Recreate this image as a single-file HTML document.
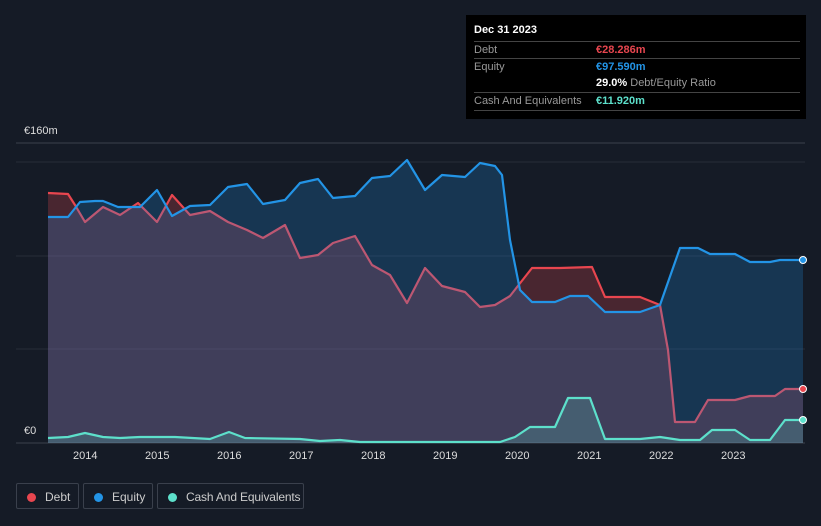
<!DOCTYPE html>
<html><head><meta charset="utf-8"><style>
body{margin:0;width:821px;height:526px;background:#151b26;font-family:"Liberation Sans",sans-serif;overflow:hidden;position:relative}
.tt{position:absolute;left:466px;top:15px;width:340px;height:104px;background:#000;color:#fff;font-size:11px}
.row{position:absolute;left:8px;width:326px;border-top:1px solid #444;height:17px;line-height:17px}
.lab{color:#999;position:absolute;left:0}
.val{position:absolute;left:122px;font-weight:bold}
.lg{position:absolute;top:483px;height:26px;border:1px solid #3a404c;border-radius:2px;color:#ccc;font-size:12px;line-height:26px;box-sizing:border-box;padding-left:10px;white-space:nowrap;overflow:hidden}
.dot{display:inline-block;width:9px;height:9px;border-radius:50%;margin-right:9px;vertical-align:-1px}
.ax{position:absolute;color:#ddd;font-size:11px}
</style></head><body>
<svg width="821" height="526" style="position:absolute;left:0;top:0">
<line x1="16" y1="143" x2="805" y2="143" stroke="#3a404c"/>
<g stroke="#262c38"><line x1="16" y1="162" x2="805" y2="162"/><line x1="16" y1="256" x2="805" y2="256"/><line x1="16" y1="349" x2="805" y2="349"/></g>
<line x1="16" y1="443" x2="805" y2="443" stroke="#3a404c"/>
<polygon fill="rgba(233,70,80,0.25)" points="48,443 48,193 68,194 75,205 85,222 103,207 120,215 138,203 157,222 172,195 190,215 210,211 228,222 247,230 263,238 285,225 300,258 318,255 333,243 355,236 372,265 390,275 407,303 425,268 442,286 465,292 480,307 495,305 510,296 532,268 560,268 592,267 605,297 640,297 660,305 668,350 675,422 695,422 708,400 735,400 750,396 775,396 785,389 803,389 803,443"/>
<polyline fill="none" stroke="#e8464f" stroke-width="2.2" stroke-linejoin="round" points="48,193 68,194 75,205 85,222 103,207 120,215 138,203 157,222 172,195 190,215 210,211 228,222 247,230 263,238 285,225 300,258 318,255 333,243 355,236 372,265 390,275 407,303 425,268 442,286 465,292 480,307 495,305 510,296 532,268 560,268 592,267 605,297 640,297 660,305 668,350 675,422 695,422 708,400 735,400 750,396 775,396 785,389 803,389"/>
<polygon fill="rgba(33,150,243,0.22)" points="48,443 48,217 68,217 80,202 95,201 103,201 118,207 140,207 157,190 172,216 190,206 210,205 228,187 247,184 263,204 285,200 300,183 318,179 333,198 355,196 372,178 390,176 407,160 425,190 442,175 465,177 480,163 495,166 502,175 510,240 520,290 532,302 555,302 570,296 588,296 605,312 640,312 660,305 680,248 698,248 710,254 735,254 750,262 770,262 780,260 803,260 803,443"/>
<polyline fill="none" stroke="#2394e6" stroke-width="2.2" stroke-linejoin="round" points="48,217 68,217 80,202 95,201 103,201 118,207 140,207 157,190 172,216 190,206 210,205 228,187 247,184 263,204 285,200 300,183 318,179 333,198 355,196 372,178 390,176 407,160 425,190 442,175 465,177 480,163 495,166 502,175 510,240 520,290 532,302 555,302 570,296 588,296 605,312 640,312 660,305 680,248 698,248 710,254 735,254 750,262 770,262 780,260 803,260"/>
<polygon fill="rgba(90,220,200,0.2)" points="48,443 48,438 68,437 85,433 103,437 120,438 140,437 175,437 210,439 229,432 245,438 300,439 320,441 340,440 360,442 445,442 500,442 515,437 530,427 555,427 568,398 590,398 605,439 640,439 660,437 680,440 700,440 712,430 735,430 750,440 770,440 785,420 803,420 803,443"/>
<polyline fill="none" stroke="#5de0cb" stroke-width="2.2" stroke-linejoin="round" points="48,438 68,437 85,433 103,437 120,438 140,437 175,437 210,439 229,432 245,438 300,439 320,441 340,440 360,442 445,442 500,442 515,437 530,427 555,427 568,398 590,398 605,439 640,439 660,437 680,440 700,440 712,430 735,430 750,440 770,440 785,420 803,420"/>
<circle cx="803" cy="260" r="3.5" fill="#2394e6" stroke="#fff" stroke-width="1"/>
<circle cx="803" cy="389" r="3.5" fill="#e8464f" stroke="#fff" stroke-width="1"/>
<circle cx="803" cy="420" r="3.5" fill="#5de0cb" stroke="#fff" stroke-width="1"/>
</svg>
<div class="ax" style="left:24px;top:125px">€160m</div>
<div class="ax" style="left:24px;top:425px">€0</div>
<div class="ax" style="left:73px;top:450px">2014</div><div class="ax" style="left:145px;top:450px">2015</div><div class="ax" style="left:217px;top:450px">2016</div><div class="ax" style="left:289px;top:450px">2017</div><div class="ax" style="left:361px;top:450px">2018</div><div class="ax" style="left:433px;top:450px">2019</div><div class="ax" style="left:505px;top:450px">2020</div><div class="ax" style="left:577px;top:450px">2021</div><div class="ax" style="left:649px;top:450px">2022</div><div class="ax" style="left:721px;top:450px">2023</div>
<div class="tt">
<div style="position:absolute;left:8px;top:9px;font-weight:bold">Dec 31 2023</div>
<div class="row" style="top:26px"><span class="lab">Debt</span><span class="val" style="color:#e8464f">€28.286m</span></div>
<div class="row" style="top:43px"><span class="lab">Equity</span><span class="val" style="color:#2394e6">€97.590m</span></div>
<div class="row" style="top:60px;border-top:none"><span class="val">29.0% <span style="color:#999;font-weight:normal">Debt/Equity Ratio</span></span></div>
<div class="row" style="top:77px"><span class="lab">Cash And Equivalents</span><span class="val" style="color:#5de0cb">€11.920m</span></div>
<div class="row" style="top:95px;height:0"></div>
</div>
<div class="lg" style="left:16px;width:63px"><span class="dot" style="background:#e8464f"></span>Debt</div>
<div class="lg" style="left:83px;width:70px"><span class="dot" style="background:#2394e6"></span>Equity</div>
<div class="lg" style="left:157px;width:147px;letter-spacing:-0.15px"><span class="dot" style="background:#5de0cb"></span>Cash And Equivalents</div>
</body></html>
